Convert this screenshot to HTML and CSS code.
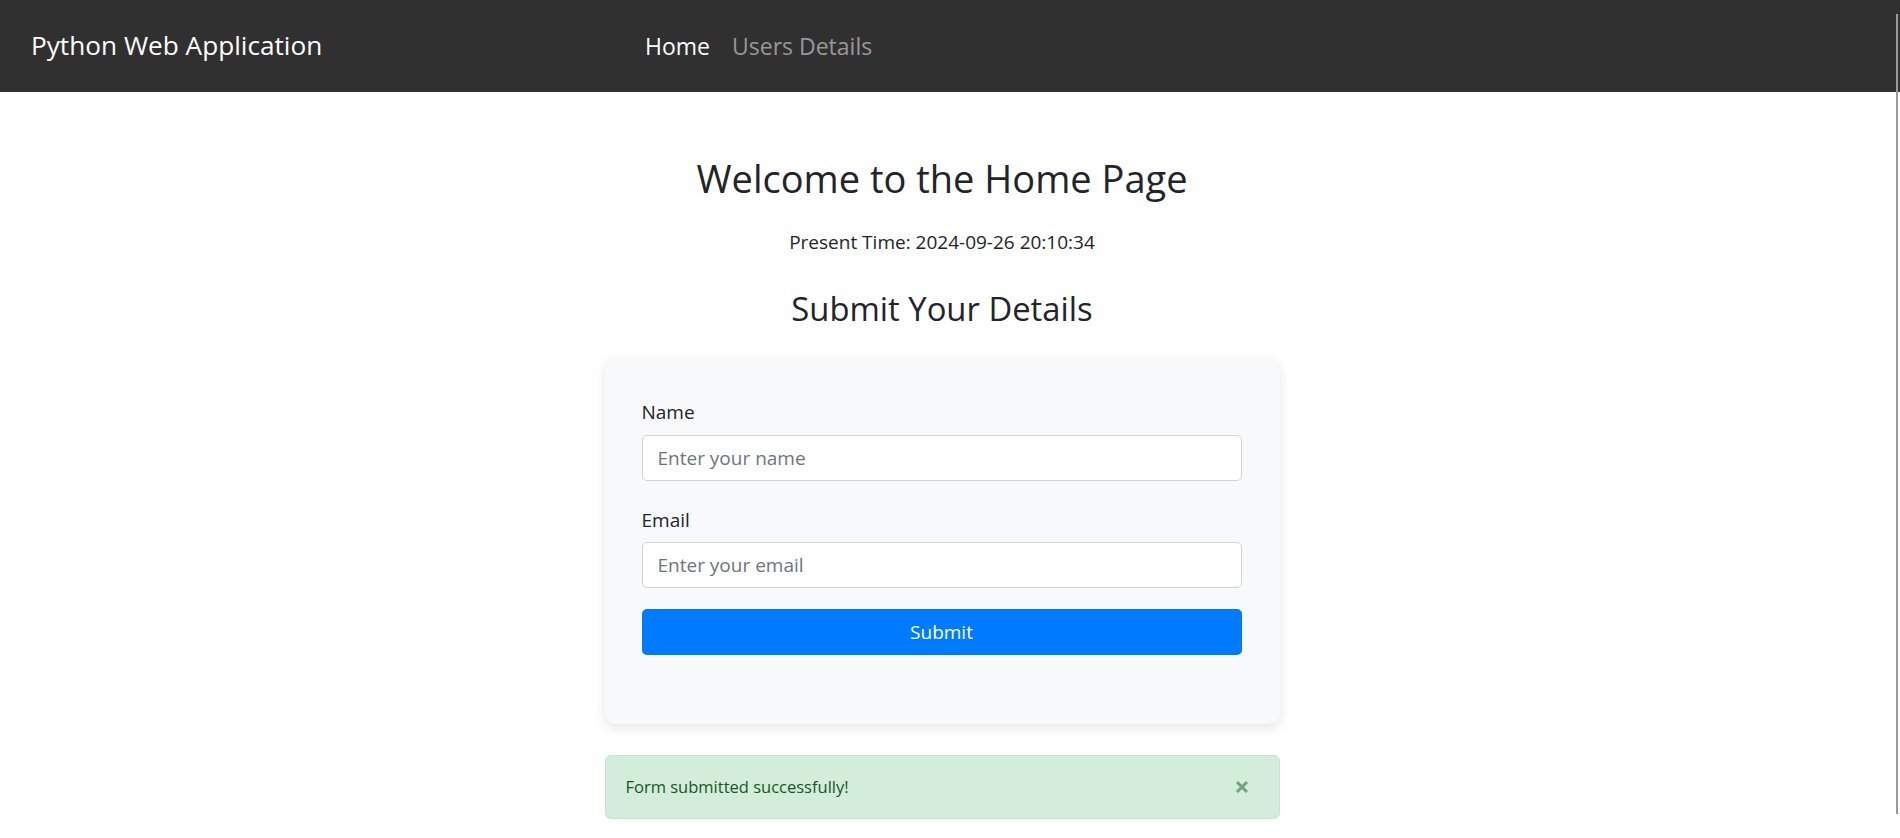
FILE: index.html
```html
<!DOCTYPE html>
<html lang="en">
<head>
<meta charset="utf-8">
<title>Python Web Application</title>
<link rel="stylesheet" href="styles.css">
</head>
<body>
<nav class="navbar">
  <a class="brand" href="#">Python Web Application</a>
  <ul class="nav">
    <li><a class="nav-link active" href="#">Home</a></li>
    <li><a class="nav-link" href="#">Users Details</a></li>
  </ul>
</nav>
<main class="page">
  <h1 class="title">Welcome to the Home Page</h1>
  <p class="time">Present Time: 2024-09-26 20:10:34</p>
  <h2 class="subtitle">Submit Your Details</h2>
  <form class="card">
    <div class="group">
      <label class="label" for="name">Name</label>
      <input class="input" id="name" type="text" placeholder="Enter your name">
    </div>
    <div class="group">
      <label class="label" for="email">Email</label>
      <input class="input" id="email" type="email" placeholder="Enter your email">
    </div>
    <button class="btn" type="button">Submit</button>
  </form>
  <div class="alert">
    <span>Form submitted successfully!</span>
    <button class="close" type="button" aria-label="Close">
      <svg width="14" height="14" viewBox="0 0 14 14"><path d="M2 2L12 12M12 2L2 12" stroke="currentColor" stroke-width="3" stroke-linecap="butt"/></svg>
    </button>
  </div>
</main>
<div class="scrollbar"></div>
</body>
</html>
```

FILE: styles.css
```css
* { box-sizing: border-box; }
html, body { margin: 0; padding: 0; }
body {
  font-family: "Open Sans", "Noto Sans", sans-serif;
  color: #212529;
  background: #fff;
  font-size: 19px;
  line-height: 1.5;
  overflow: hidden;
}
.navbar {
  height: 92px;
  background: #303030;
  display: flex;
  align-items: center;
  padding-left: 31px;
}
.brand {
  flex: 0 0 603px;
  color: #fff;
  text-decoration: none;
  font-size: 26.2px;
  line-height: 1.5;
}
.nav {
  list-style: none;
  margin: 0;
  padding: 0;
  display: flex;
}
.nav-link {
  display: block;
  padding: 0 11px;
  font-size: 23px;
  color: rgba(255,255,255,.5);
  text-decoration: none;
}
.nav-link.active { color: #fff; }
.page {
  padding-right: 16px;
  display: flex;
  flex-direction: column;
  align-items: center;
}
.title {
  margin: 64px 0 0;
  font-size: 38px;
  font-weight: 400;
  line-height: 1.2;
}
.time {
  margin: 26px 0 0;
}
.subtitle {
  margin: 33px 0 0;
  font-size: 32.8px;
  font-weight: 400;
  line-height: 1.2;
}
.card {
  margin-top: 30px;
  width: 675px;
  background: #f8f9fa;
  border-radius: 10px;
  box-shadow: 0 4px 12px rgba(0,0,0,.1);
  padding: 40px 38px 69px 37px;
}
.group { margin-bottom: 25px; }
.group + .group { margin-bottom: 21px; }
.label {
  display: block;
  margin-bottom: 8px;
}
.input {
  display: block;
  width: 100%;
  height: 46px;
  border: 1px solid #ced4da;
  border-radius: 5px;
  padding: 0 15px;
  font: inherit;
  color: #495057;
  background: #fff;
}
.input::placeholder { color: #6c757d; }
.btn {
  display: block;
  width: 100%;
  height: 46px;
  border: none;
  border-radius: 5px;
  background: #007bff;
  color: #fff;
  font: inherit;
}
.alert {
  margin-top: 31px;
  width: 675px;
  height: 64px;
  background: #d4edda;
  border: 1px solid #c3e6cb;
  border-radius: 6px;
  color: #155724;
  display: flex;
  align-items: center;
  justify-content: space-between;
  padding: 0 30px 0 20px;
  font-size: 16.5px;
}
.close {
  border: none;
  background: none;
  padding: 0;
  color: #155724;
  opacity: .5;
  display: flex;
}
.scrollbar {
  position: absolute;
  left: 1896px;
  top: 14px;
  width: 2px;
  height: 800px;
  background: #9a9a9a;
}
```
